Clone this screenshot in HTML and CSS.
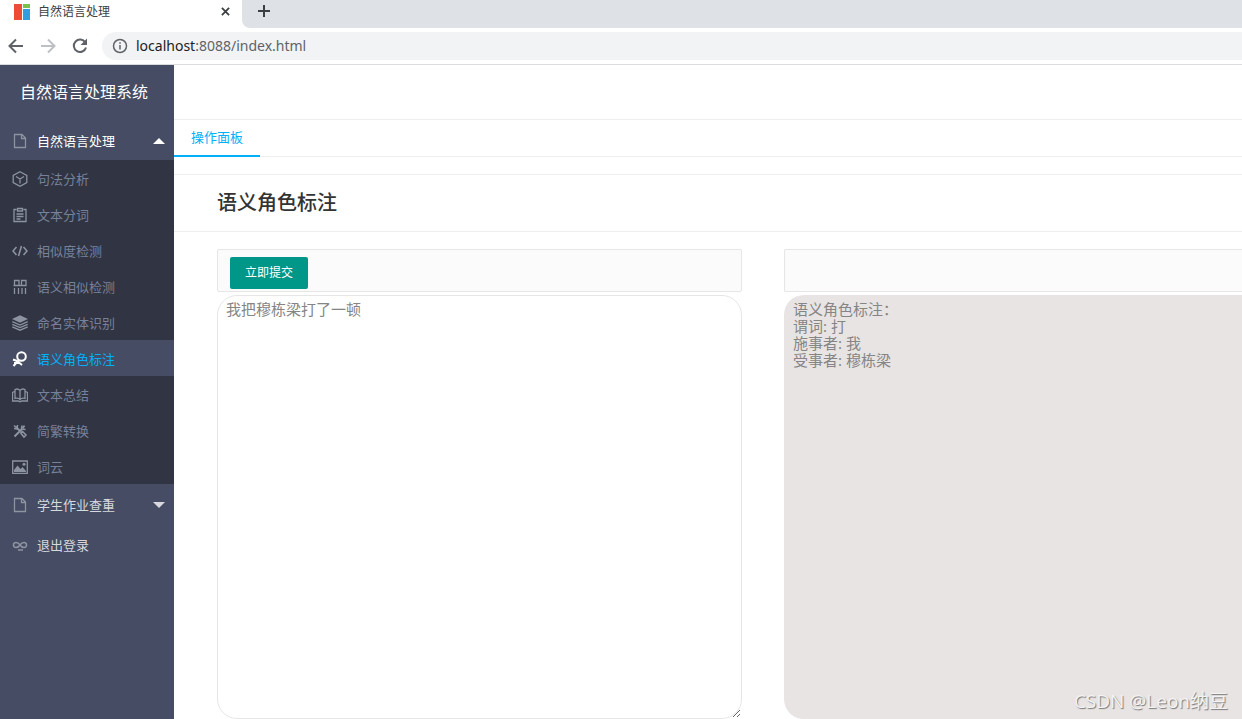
FILE: index.html
```html
<!DOCTYPE html>
<html lang="zh-CN">
<head>
<meta charset="utf-8">
<title>自然语言处理</title>
<link rel="stylesheet" href="styles.css">
</head>
<body>
<header class="browser">
  <div class="tabstrip">
    <div class="browser-tab">
      <svg class="favicon" viewBox="0 0 16 16"><path fill="#ee4c36" d="M0 0h8v16H0z"/><path fill="#7cc14a" d="M9 0h7v4H9z"/><path fill="#2f9fe0" d="M9 5h7v11H9z"/></svg>
      <span class="browser-tab-title">自然语言处理</span>
      <button class="plain" aria-label="关闭标签页"><svg class="close" viewBox="0 0 10 10"><path d="M1 1l8 8M9 1l-8 8"/></svg></button>
    </div>
    <div class="strip-rest"><button class="plain" aria-label="新标签页"><svg class="plus" viewBox="0 0 12 12"><path d="M6 0v12M0 6h12"/></svg></button></div>
  </div>
  <div class="toolbar">
    <button class="plain" aria-label="后退"><svg class="nav-icon" viewBox="0 0 16 16"><path d="M15 8H2M8 1.5L1.500 8 8 14.500"/></svg></button>
    <button class="plain" aria-label="前进" disabled><svg class="nav-icon dim" viewBox="0 0 16 16"><path d="M1 8h13M8 1.500L14.500 8 8 14.500"/></svg></button>
    <button class="plain" aria-label="刷新"><svg class="nav-icon" viewBox="0 0 16 16"><path d="M13.300 4.500A6.200 6.200 0 1 0 14 9.500"/><path class="solid" d="M15 0.500v6.500H8.500z"/></svg></button>
    <div class="address">
      <svg class="info" viewBox="0 0 16 16"><circle cx="8" cy="8" r="6.500"/><path d="M8 7v4.500M8 4.200v1.600"/></svg>
      <span class="url"><b>localhost</b>:8088/index.html</span>
    </div>
  </div>
</header>
<div class="app">
  <nav class="sidebar">
    <h1 class="brand">自然语言处理系统</h1>
    <a class="item open" href="#"><svg class="icon" viewBox="0 0 16 16"><path d="M2.500 1.500h7.500l3.500 3.500v9.500h-11zM9.500 1.500v4h4"/></svg>自然语言处理<svg class="caret" viewBox="0 0 12 6"><path d="M0 6l6-6 6 6z"/></svg></a>
    <div class="submenu">
      <a class="sub" href="#"><svg class="icon" viewBox="0 0 16 16"><path d="M8 .7l6.800 3.700v7.200L8 15.300l-6.800-3.700V4.400zM4 5.500l4 2.500 4-2.500M8 8v4.500"/></svg>句法分析</a>
      <a class="sub" href="#"><svg class="icon" viewBox="0 0 16 16"><path d="M4.500 2.500h-2.500v12h12v-12h-2.500M5.500 1.500h5v2.500h-5zM4.500 7h7M4.500 9.500h7M4.500 12h4"/></svg>文本分词</a>
      <a class="sub" href="#"><svg class="icon" viewBox="0 0 16 16"><path class="mid" d="M4.500 4L1 8l3.500 4M11.500 4L15 8l-3.500 4M9.500 3l-3 10"/></svg>相似度检测</a>
      <a class="sub" href="#"><svg class="icon" viewBox="0 0 16 16"><path d="M2.500 1.500h4.500v5H2.500zM9.500 1.500H14v5H9.500zM1.500 6.500h13M2.500 9v6M6.500 9v6M10 9v6M13.500 9v6"/></svg>语义相似检测</a>
      <a class="sub" href="#"><svg class="icon" viewBox="0 0 16 16"><path class="solid" d="M8 .3l8 3.700-8 3.700L0 4z"/><path d="M.3 6.700L8 10l7.700-3.300M.3 9.300L8 12.600l7.700-3.300M.3 11.900L8 15.200l7.700-3.300"/></svg>命名实体识别</a>
      <a class="sub active" href="#"><svg class="icon" viewBox="0 0 16 16"><circle class="thick" cx="9.500" cy="5.500" r="4.300"/><path class="thick" d="M1 8.500l4 1.500 5 4M7 9.500L5 11l-3.500 4M2 12h4"/></svg>语义角色标注</a>
      <a class="sub" href="#"><svg class="icon" viewBox="0 0 16 16"><path d="M8 3.500C6.500 1.800 4.500 1.800 3 2.500v9c1.500-.7 3.500-.5 5 1 1.500-1.500 3.500-1.700 5-1v-9c-1.500-.7-3.500-.7-5 1v9M2.500 4.500l-2 1v8.500h5.500l2 .7 2-.7h5.500V5.500l-2-1"/></svg>文本总结</a>
      <a class="sub" href="#"><svg class="icon" viewBox="0 0 16 16"><path class="thick" d="M2.500 13.500L10 6M4.500 4.500l3 3"/><path class="mid" d="M2 2.500L5 5M2 5.500l3 .3L5.500 2M10 2.500L9.500 6l4 .5M12.500 2.500L11 5M9 9.500l1.500-1 3.500 3.500-2 2-3-3.500z"/></svg>简繁转换</a>
      <a class="sub" href="#"><svg class="icon" viewBox="0 0 16 16"><path d="M.7 2h14.600v12.300H.7z"/><path class="solid" d="M2 13v-2l3.500-4.500L8.500 10l2-2 3.500 4v1z"/><circle class="solid" cx="12" cy="5.300" r="1.500"/></svg>词云</a>
    </div>
    <a class="item" href="#"><svg class="icon" viewBox="0 0 16 16"><path d="M2.500 1.500h7.500l3.500 3.500v9.500h-11zM9.500 1.500v4h4"/></svg>学生作业查重<svg class="caret" viewBox="0 0 12 6"><path d="M0 0h12L6 6z"/></svg></a>
    <a class="item" href="#"><svg class="icon" viewBox="0 0 16 16"><path class="mid" d="M8 8C6 5 1.500 4.500 1.500 8S6 11 8 8s6.500-3.500 6.500 0S10 11 8 8M6 13h5"/></svg>退出登录</a>
  </nav>
  <main class="main">
    <div class="topbar"></div>
    <div class="tabs"><a class="tab" href="#">操作面板</a></div>
    <section class="page">
      <h2 class="page-title">语义角色标注</h2>
      <form class="work">
        <div class="column">
          <div class="tools"><button class="submit" type="button">立即提交</button></div>
          <textarea class="text" aria-label="输入文本">我把穆栋梁打了一顿</textarea>
        </div>
        <div class="column">
          <div class="tools cut"></div>
          <textarea class="text result" aria-label="标注结果" readonly>语义角色标注：
谓词: 打
施事者: 我
受事者: 穆栋梁</textarea>
        </div>
      </form>
    </section>
  </main>
</div>
<div class="watermark">CSDN @Leon纳豆</div>
</body>
</html>
```
FILE: styles.css
```css
* { box-sizing: border-box; }
body {
  margin: 0;
  height: 100vh;
  display: flex;
  flex-direction: column;
  overflow: hidden;
  background: #fff;
  color: #333;
  font: 13px/20px "Noto Sans", "Noto Sans CJK SC", sans-serif;
}
a { color: inherit; text-decoration: none; }
svg { display: block; flex: none; fill: none; stroke: currentColor; }
.plain { display: flex; padding: 0; border: 0; background: none; color: #3c4043; }

.browser { border-bottom: 1px solid #dadce0; }
.tabstrip { display: flex; height: 28px; background: #fff; }
.browser-tab { display: flex; align-items: center; width: 242px; padding: 0 12px 5px 14px; }
.favicon { width: 16px; height: 16px; stroke: none; }
.browser-tab-title { flex: 1; padding-left: 8px; font-size: 12px; color: #3c4043; }
.close { width: 9px; height: 9px; stroke-width: 2; }
.strip-rest { flex: 1; padding: 5px 16px; border-bottom-left-radius: 8px; background: #dee1e6; }
.plus { width: 12px; height: 12px; stroke-width: 2; }
.toolbar { display: flex; align-items: center; gap: 16px; height: 36px; padding-left: 8px; }
.nav-icon { width: 16px; height: 16px; stroke: #5f6368; stroke-width: 2; }
.nav-icon .solid { fill: #5f6368; stroke: none; }
.nav-icon.dim { stroke: #bdc1c6; }
.address { flex: 1; display: flex; align-items: center; gap: 8px; height: 28px; margin-left: -2px; padding-left: 10px; border-radius: 14px 0 0 14px; background: #f1f3f4; }
.info { width: 16px; height: 16px; stroke: #5f6368; stroke-width: 1.5; }
.url { font-size: 14px; color: #5f6368; }
.url b { font-weight: 400; color: #202124; }

.app { flex: 1; display: flex; min-height: 0; }
.sidebar { flex: none; width: 174px; background: #454c63; color: #fff; }
.brand { margin: 0; padding-left: 20px; font-size: 16px; font-weight: 400; line-height: 55px; }
.item, .sub { display: flex; align-items: center; gap: 9px; padding: 1px 9px 0 12px; }
.item { height: 40px; color: #d7d9df; }
.item.open { color: #fff; }
.sub { height: 36px; color: #78819a; }
.submenu { background: #303443; }
.icon { width: 16px; height: 16px; color: #8d93a1; stroke-width: 1.3; }
.icon .solid { fill: currentColor; stroke: none; }
.icon .mid { stroke-width: 1.6; }
.icon .thick { stroke-width: 2; }
.caret { width: 12px; height: 6px; margin-left: auto; fill: currentColor; stroke: none; }
.active { background: #454c63; color: #01b0fa; }
.active .icon { color: #fff; }

.main { flex: 1; display: flex; flex-direction: column; min-width: 0; }
.topbar { height: 55px; border-bottom: 1px solid #eee; }
.tabs { display: flex; height: 37px; border-bottom: 1px solid #eee; }
.tab { height: 37px; padding: 0 17px; border-bottom: 2px solid #01b0fa; color: #01b0fa; line-height: 34px; }
.page { flex: 1; display: flex; flex-direction: column; margin-top: 17px; border-top: 1px solid #eee; }
.page-title { margin: 0; padding-left: 43px; border-bottom: 1px solid #eee; font-size: 20px; font-weight: 500; line-height: 56px; }
.work { flex: 1; display: grid; grid-template-columns: minmax(0, 525fr) minmax(0, 458fr); gap: 42px; padding: 17px 0 0 43px; }
.column { display: flex; flex-direction: column; gap: 3px; }
.tools { height: 43px; padding: 7px 12px; border: 1px solid #e6e6e6; border-radius: 2px; background: #fbfbfb; }
.cut { border-right: 0; border-radius: 2px 0 0 2px; }
.submit { height: 32px; padding: 0 15px; border: 0; border-radius: 2px; background: #009688; color: #fff; font: inherit; font-size: 12px; }
.text { flex: 1; width: 100%; margin: 0; padding: 5px 8px; border: 1px solid #e6e6e6; border-radius: 20px; background: #fff; color: #858585; font: inherit; font-size: 15px; line-height: 17px; }
.result { border: 0; padding: 6px 9px; border-radius: 20px 0 0 20px; background: #e8e4e3; resize: none; }
.watermark { position: absolute; right: 14px; bottom: 4px; color: #f4f2f2; font-family: "Open Sans", "Noto Sans CJK SC", sans-serif; font-size: 19px; line-height: 28px; text-shadow: 1px 1px 1px #777; }
```
